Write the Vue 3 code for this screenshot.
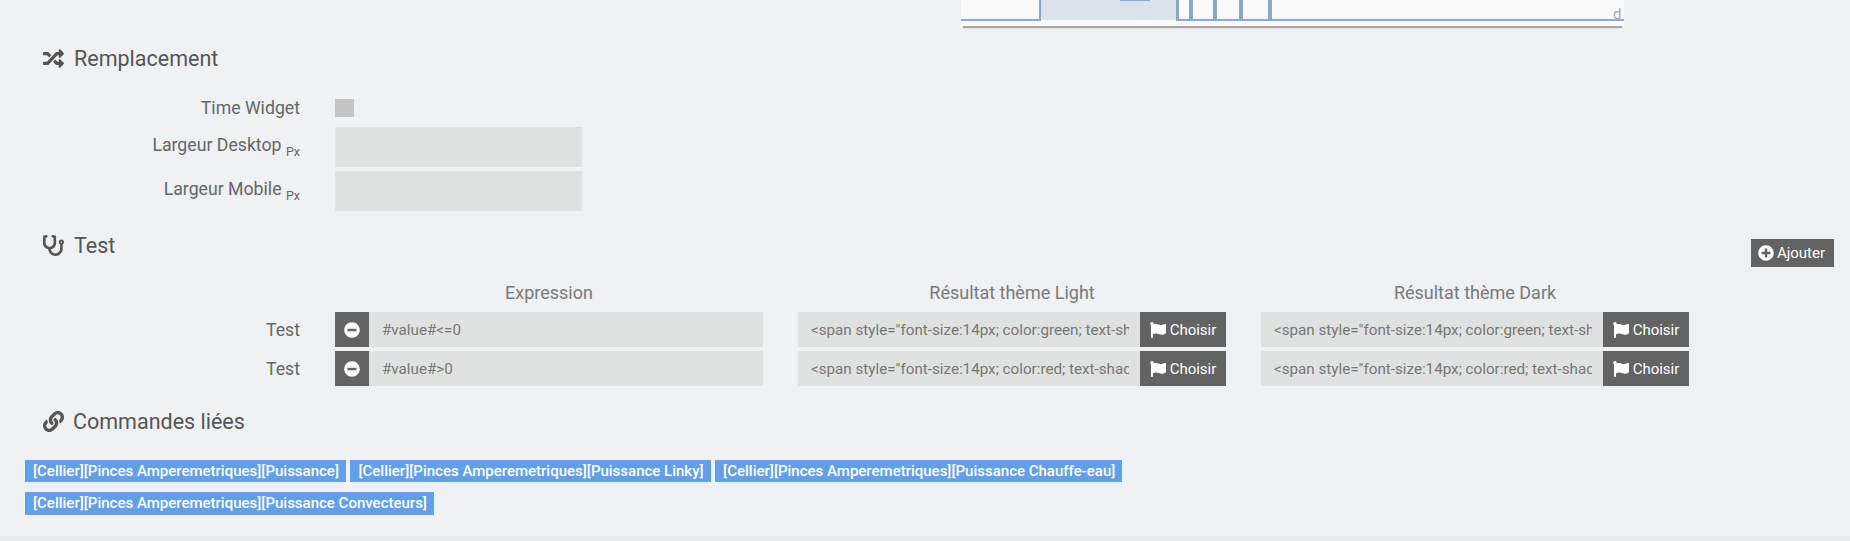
<script setup>
const forms = [
  { label: 'Largeur Desktop' },
  { label: 'Largeur Mobile' },
]
const rows = [
  { expr: '#value#<=0', html: '<span style="font-size:14px; color:green; text-shadow: 1px 1px 2px #000">' },
  { expr: '#value#>0', html: '<span style="font-size:14px; color:red; text-shadow: 1px 1px 2px #000">' },
]
const tags = [
  '[Cellier][Pinces Amperemetriques][Puissance]',
  '[Cellier][Pinces Amperemetriques][Puissance Linky]',
  '[Cellier][Pinces Amperemetriques][Puissance Chauffe-eau]',
  '[Cellier][Pinces Amperemetriques][Puissance Convecteurs]',
]
const flag = 'M349.565 98.783C295.978 98.783 251.721 64 184.348 64c-24.955 0-47.309 4.384-68.045 12.013a55.947 55.947 0 0 0 3.586-23.562C118.117 24.015 94.806 1.206 66.338.048 34.345-1.254 8 24.296 8 56c0 19.026 9.497 35.825 24 45.945V488c0 13.255 10.745 24 24 24h16c13.255 0 24-10.745 24-24v-94.4c28.311-12.064 63.582-22.122 114.435-22.122 53.588 0 97.844 34.783 165.217 34.783 48.169 0 86.667-16.294 122.505-40.858C506.84 359.452 512 349.571 512 339.045v-243.1c0-23.393-24.269-38.87-45.485-29.016-34.338 15.948-76.454 31.854-116.95 31.854z'
</script>

<template>
  <div class="page">
    <div class="chart">
      <svg width="663" height="26" viewBox="961 0 663 26">
        <rect x="961" y="0" width="663" height="26" fill="#fafafa" />
        <rect x="1040" y="0" width="136" height="20" fill="#dbe3ed" />
        <rect x="1120" y="0" width="30" height="1" fill="#8aa8cc" />
        <rect x="961" y="19" width="79" height="2" fill="#8eabcf" />
        <rect x="1176" y="19" width="448" height="2" fill="#8eabcf" />
        <rect x="1039" y="0" width="2" height="21" fill="#8aa8cc" />
        <rect x="1176" y="0" width="3" height="21" fill="#8aa8cc" />
        <rect x="1189" y="0" width="4" height="21" fill="#8aa8cc" />
        <rect x="1213" y="0" width="4" height="21" fill="#8aa8cc" />
        <rect x="1239" y="0" width="4" height="21" fill="#8aa8cc" />
        <rect x="1268" y="0" width="4" height="21" fill="#8aa8cc" />
        <text x="1613" y="19" class="chart-d">d</text>
      </svg>
    </div>

    <div class="heading first">
      <svg class="ico" viewBox="0 0 512 512"><path d="M504.971 359.029c9.373 9.373 9.373 24.569 0 33.941l-80 79.984c-15.01 15.01-40.971 4.49-40.971-16.971V416h-58.785a12.004 12.004 0 0 1-8.773-3.812l-70.556-75.596 53.333-57.143L352 336h32v-39.981c0-21.438 25.943-31.998 40.971-16.971l80 79.981zM12 176h84l52.781 56.551 53.333-57.143-70.556-75.596A11.999 11.999 0 0 0 122.785 96H12c-6.627 0-12 5.373-12 12v56c0 6.627 5.373 12 12 12zm372 0v39.984c0 21.46 25.961 31.98 40.971 16.971l80-79.984c9.373-9.373 9.373-24.569 0-33.941l-80-79.981C409.943 24.021 384 34.582 384 56.019V96h-58.785a12.004 12.004 0 0 0-8.773 3.812L96 336H12c-6.627 0-12 5.373-12 12v56c0 6.627 5.373 12 12 12h110.785c3.326 0 6.503-1.381 8.773-3.812L352 176h32z" /></svg>
      <span>Remplacement</span>
    </div>

    <div class="form">
      <div class="flabel check-label">Time Widget</div>
      <div class="check-cell"><span class="check"></span></div>
      <template v-for="f in forms" :key="f.label">
        <div class="flabel lifted">{{ f.label }} <sub class="unit">Px</sub></div>
        <div class="field tall"></div>
      </template>
    </div>

    <div class="heading test">
      <svg class="ico" viewBox="0 0 512 512"><path d="M447.1 112c-34.2.5-62.3 28.4-63 62.6-.5 24.3 12.5 45.6 32 56.8V344c0 57.3-50.2 104-112 104-60 0-109.2-44.1-111.9-99.2C265 333.8 320 269.2 320 192V36.6c0-11.4-8.1-21.3-19.3-23.5L237.8.5c-13-2.6-25.6 5.8-28.2 18.8L206.4 35c-2.6 13 5.8 25.6 18.8 28.2l30.7 6.1v121.4c0 52.9-42.2 96.7-95.1 97.2-53.4.5-96.9-42.7-96.9-96V69.4l30.7-6.1c13-2.6 21.4-15.2 18.8-28.2l-3.1-15.7C107.7 6.4 95.1-2 82.1.6L19.3 13C8.1 15.3 0 25.1 0 36.6V192c0 77.3 55.1 142 128.1 156.8C130.7 439.2 208.6 512 304 512c97 0 176-75.4 176-168V231.4c19.1-11.1 32-31.7 32-55.4 0-35.7-29.2-64.5-64.9-64zm.9 80c-8.8 0-16-7.2-16-16s7.2-16 16-16 16 7.2 16 16-7.2 16-16 16z" /></svg>
      <span>Test</span>
      <button class="btn add">
        <svg class="bico" viewBox="0 0 512 512"><path d="M256 8C119 8 8 119 8 256s111 248 248 248 248-111 248-248S393 8 256 8zm144 276c0 6.6-5.4 12-12 12h-92v92c0 6.6-5.4 12-12 12h-56c-6.6 0-12-5.4-12-12v-92h-92c-6.6 0-12-5.4-12-12v-56c0-6.6 5.4-12 12-12h92v-92c0-6.6 5.4-12 12-12h56c6.6 0 12 5.4 12 12v92h92c6.6 0 12 5.4 12 12v56z" /></svg>
        Ajouter
      </button>
    </div>

    <div class="table">
      <div></div>
      <div class="th">Expression</div>
      <div class="th">Résultat thème Light</div>
      <div class="th">Résultat thème Dark</div>
      <template v-for="r in rows" :key="r.expr">
        <div class="flabel">Test</div>
        <div class="group">
          <button class="btn minus">
            <svg class="bico" viewBox="0 0 512 512"><path d="M256 8C119 8 8 119 8 256s111 248 248 248 248-111 248-248S393 8 256 8zM124 296c-6.6 0-12-5.4-12-12v-56c0-6.6 5.4-12 12-12h264c6.6 0 12 5.4 12 12v56c0 6.6-5.4 12-12 12H124z" /></svg>
          </button>
          <input class="inp" :value="r.expr" readonly />
        </div>
        <div class="group" v-for="n in 2" :key="n">
          <input class="inp" :value="r.html" readonly />
          <button class="btn choose">
            <svg class="bico" viewBox="0 0 512 512"><path :d="flag" /></svg>
            Choisir
          </button>
        </div>
      </template>
    </div>

    <div class="heading links">
      <svg class="ico" viewBox="0 0 512 512"><path d="M326.612 185.391c59.747 59.809 58.927 155.698.36 214.59-.11.12-.24.25-.36.37l-67.2 67.2c-59.27 59.27-155.699 59.262-214.96 0-59.27-59.26-59.27-155.7 0-214.96l37.106-37.106c9.84-9.84 26.786-3.3 27.294 10.606.648 17.722 3.826 35.527 9.69 52.721 1.986 5.822.567 12.262-3.783 16.612l-13.087 13.087c-28.026 28.026-28.905 73.66-1.155 101.96 28.024 28.579 74.086 28.749 102.325.51l67.2-67.19c28.191-28.191 28.073-73.757 0-101.83-3.701-3.694-7.429-6.564-10.341-8.569a16.037 16.037 0 0 1-6.947-12.606c-.396-10.567 3.348-21.456 11.698-29.806l21.054-21.055c5.521-5.521 14.182-6.199 20.584-1.731a152.482 152.482 0 0 1 20.522 17.197zM467.547 44.449c-59.261-59.262-155.69-59.27-214.96 0l-67.2 67.2c-.12.12-.25.25-.36.37-58.566 58.892-59.387 154.781.36 214.59a152.454 152.454 0 0 0 20.521 17.196c6.402 4.468 15.064 3.789 20.584-1.731l21.054-21.055c8.35-8.35 12.094-19.239 11.698-29.806a16.037 16.037 0 0 0-6.947-12.606c-2.912-2.005-6.64-4.875-10.341-8.569-28.073-28.073-28.191-73.639 0-101.83l67.2-67.19c28.239-28.239 74.3-28.069 102.325.51 27.75 28.3 26.872 73.934-1.155 101.96l-13.087 13.087c-4.35 4.35-5.769 10.79-3.783 16.612 5.864 17.194 9.042 34.999 9.69 52.721.509 13.906 17.454 20.446 27.294 10.606l37.106-37.106c59.271-59.259 59.271-155.699.001-214.959z" /></svg>
      <span>Commandes liées</span>
    </div>

    <div class="tags">
      <span class="tag" v-for="t in tags" :key="t">{{ t }}</span>
    </div>
    <div class="band"></div>
  </div>
</template>

<style>
html, body { margin: 0; background: #eff1f3; }
</style>

<style scoped>
.page {
  width: 1850px;
  height: 541px;
  overflow: hidden;
  background: #eff1f3;
  font-family: Roboto, "Liberation Sans", sans-serif;
  font-size: 15px;
  color: #666;
}
.chart {
  width: 663px;
  height: 26px;
  margin-left: 961px;
  box-shadow: 0 4px 1px -2px rgba(0, 0, 0, 0.3);
}
.chart svg { display: block; }
.chart-d { font-family: Roboto, sans-serif; font-size: 15px; fill: #aaa; }
.heading {
  display: flex;
  align-items: center;
  padding: 0 16px 0 43px;
  font-size: 21.5px;
  color: #555;
  height: 26px;
  gap: 10px;
}
.heading.first { margin-top: 19px; }
.heading.test { margin-top: 21px; }
.heading.links { margin-top: 22px; gap: 9px; }
.ico { width: 21px; height: 21px; fill: #555; flex: none; }
.form {
  display: grid;
  grid-template-columns: 300px 247px;
  column-gap: 35px;
  margin-top: 28px;
}
.flabel {
  text-align: right;
  font-size: 17.7px;
  font-weight: 400;
  color: #666;
  align-self: center;
  line-height: 20px;
}
.lifted { margin-top: 6px; }
.lifted ~ .lifted { margin-top: 0; }
.check-cell { height: 18px; }
.check-label { height: 18px; line-height: 18px; }
.check { display: block; width: 19px; height: 18px; background: #c4c4c4; }
.field { background: #e0e2e1; height: 40px; }
.field.tall { margin-top: 10px; }
.field.tall ~ .field.tall { margin-top: 4px; }
.unit { font-size: 12.5px; line-height: 0; }
.btn {
  display: inline-flex;
  align-items: center;
  justify-content: center;
  gap: 4px;
  border: 0;
  margin: 0;
  background: #636363;
  color: #fff;
  font-family: inherit;
  font-size: 15px;
  flex: none;
}
.bico { width: 16px; height: 16px; fill: #fff; flex: none; }
.add {
  align-self: flex-start;
  margin-left: auto;
  margin-top: 7px;
  width: 83px;
  height: 28px;
  padding: 0 2px 0 0;
  gap: 3px;
}
.table {
  display: grid;
  grid-template-columns: 300px 428px 428px 428px;
  column-gap: 35px;
  row-gap: 4px;
  margin-top: 25px;
}
.th {
  height: 20px;
  line-height: 20px;
  margin-bottom: 5px;
  text-align: center;
  font-size: 18px;
  color: #7a7a7a;
}
.group { display: flex; height: 35px; }
.minus { width: 34px; height: 35px; padding: 0; }
.choose { width: 86px; height: 35px; padding: 0; }
.inp {
  flex: 1;
  min-width: 0;
  border: 0;
  outline: 0;
  margin: 0;
  height: 35px;
  box-sizing: border-box;
  padding: 0 11px 0 13px;
  background: #e0e2e1;
  color: #777;
  font-family: inherit;
  font-size: 15.2px;
}
.tags {
  display: flex;
  flex-wrap: wrap;
  gap: 10px 4.5px;
  margin-top: 26px;
  padding-left: 25px;
  width: 1150px;
}
.tag {
  display: block;
  height: 22px;
  line-height: 22px;
  padding: 0 7px 0 8px;
  background: #639fe6;
  color: #fff;
  font-size: 15px;
  font-weight: 500;
}
.tag:last-child { height: 23px; line-height: 23px; }
.band {
  margin-top: 21px;
  height: 5px;
  background: #e8e9eb;
}
</style>
